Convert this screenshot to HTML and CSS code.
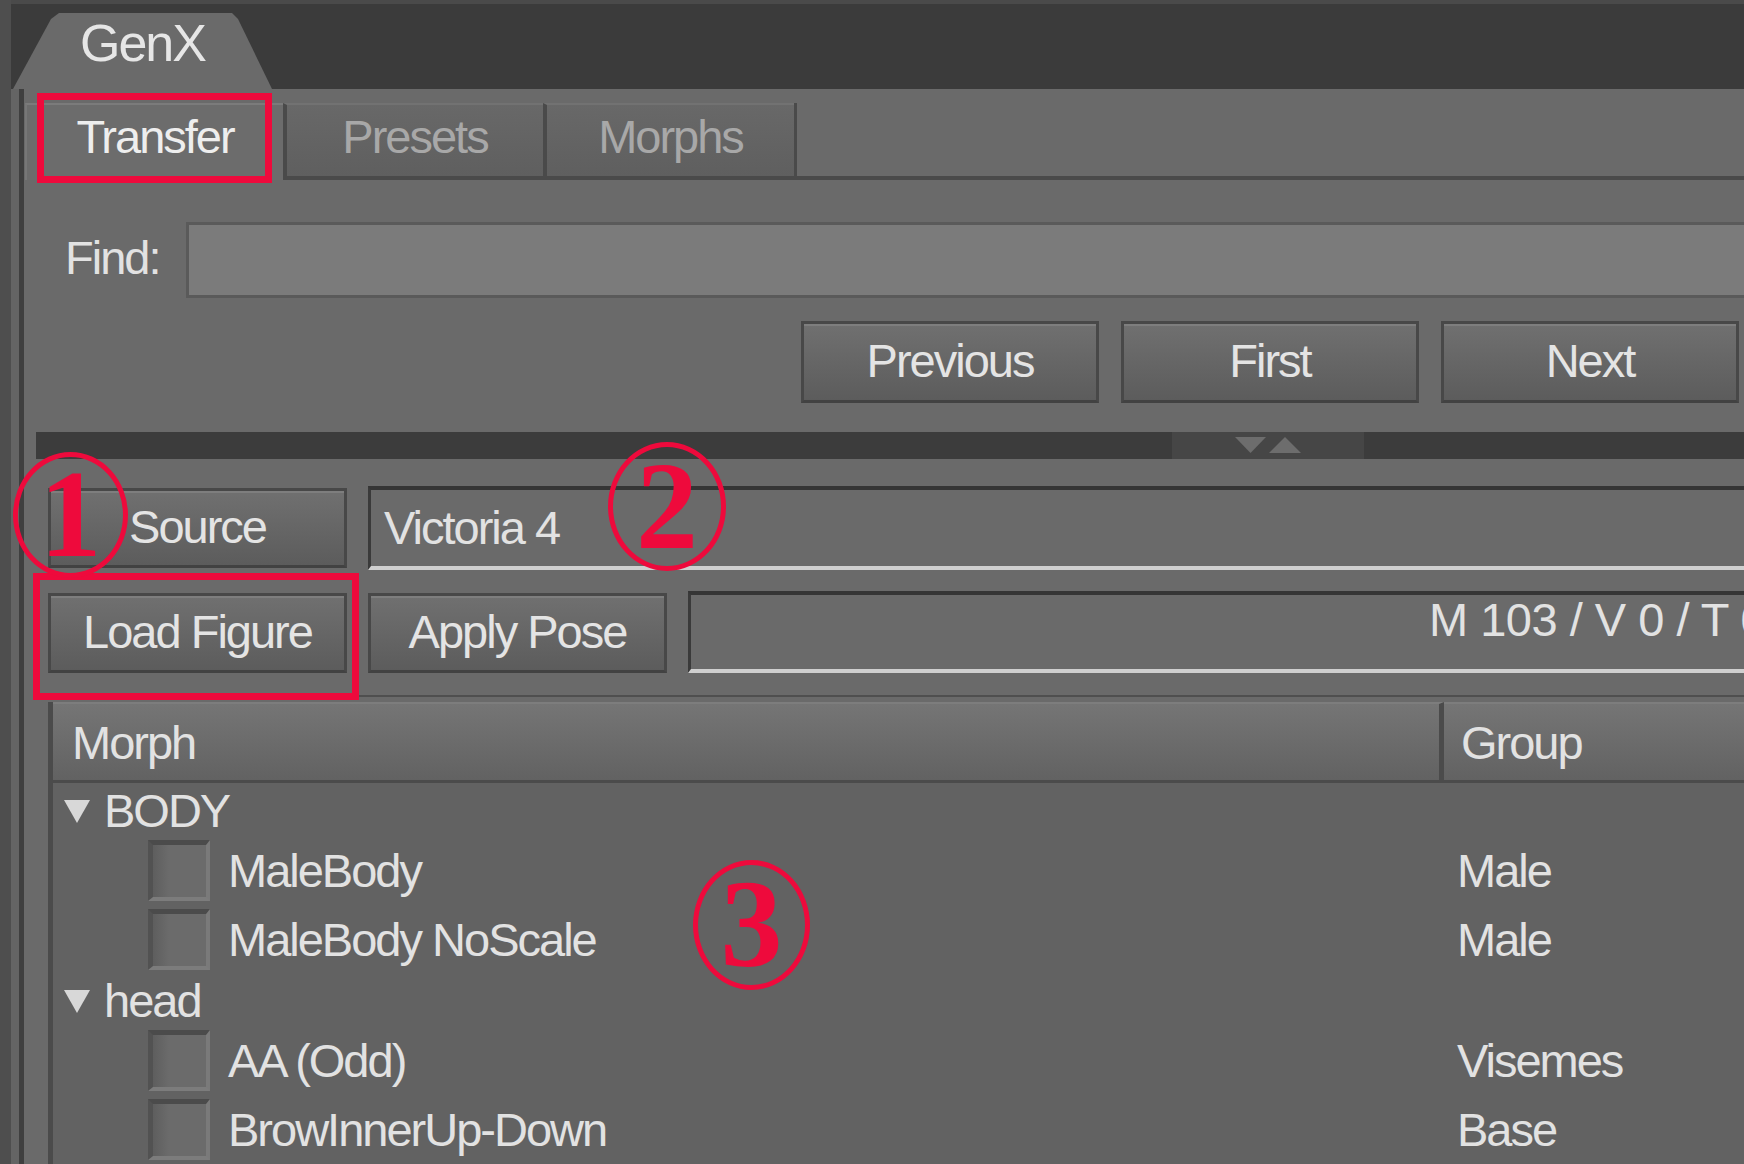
FILE: index.html
```html
<!DOCTYPE html>
<html>
<head>
<meta charset="utf-8">
<title>GenX</title>
<link rel="stylesheet" href="styles.css">
</head>
<body>
<div class="window">
  <div class="edge"></div>
  <div class="content">
    <div class="titlebar">
      <div class="doctab">GenX</div>
    </div>
    <div class="pane">
      <div class="pane-edge"></div>
      <div class="pane-line"></div>
      <div class="pane-body">
        <div class="tabs">
          <div class="tab active">Transfer</div>
          <div class="tab presets">Presets</div>
          <div class="tab morphs">Morphs</div>
          <div class="tab-fill"></div>
        </div>
        <div class="find-row">
          <div class="find-label">Find:</div>
          <div class="find-input"></div>
        </div>
        <div class="nav-row">
          <div class="btn">Previous</div>
          <div class="btn">First</div>
          <div class="btn">Next</div>
        </div>
        <div class="splitter">
          <div class="handle">
            <svg width="66" height="16" viewBox="0 0 66 16"><polygon points="0,0 31,0 15.5,16" fill="#6d6d6d"/><polygon points="34,16 66,16 50,0" fill="#6d6d6d"/></svg>
          </div>
        </div>
        <div class="source-row">
          <div class="btn wide">Source</div>
          <div class="field source-field">Victoria 4</div>
        </div>
        <div class="load-row">
          <div class="btn wide">Load Figure</div>
          <div class="btn wide">Apply Pose</div>
          <div class="field count-field">M 103 / V 0 / T 0</div>
        </div>
        <div class="sep"></div>
        <div class="table">
          <div class="thead">
            <div class="th morph">Morph</div>
            <div class="th group">Group</div>
          </div>
          <div class="tree">
            <div class="group-row"><svg class="tri" width="26" height="25" viewBox="0 0 26 25"><polygon points="0,2 26,2 13,25" fill="#d8d8d8"/></svg><span>BODY</span></div>
            <div class="item-row"><div class="check"></div><div class="name">MaleBody</div><div class="grp">Male</div></div>
            <div class="item-row"><div class="check"></div><div class="name">MaleBody NoScale</div><div class="grp">Male</div></div>
            <div class="group-row"><svg class="tri" width="26" height="25" viewBox="0 0 26 25"><polygon points="0,2 26,2 13,25" fill="#d8d8d8"/></svg><span>head</span></div>
            <div class="item-row"><div class="check"></div><div class="name">AA (Odd)</div><div class="grp">Visemes</div></div>
            <div class="item-row"><div class="check"></div><div class="name">BrowInnerUp-Down</div><div class="grp">Base</div></div>
          </div>
        </div>
      </div>
    </div>
  </div>

  <div class="mark box-transfer"></div>
  <div class="mark box-load"></div>
  <div class="num n1"><span>1</span></div>
  <div class="num n2"><span>2</span></div>
  <div class="num n3"><span>3</span></div>
</div>
</body>
</html>
```

FILE: styles.css
```css
html, body {
  margin: 0;
  padding: 0;
}
body {
  width: 1744px;
  height: 1164px;
  overflow: hidden;
  background: #4e4e4e;
  font-family: "Liberation Sans", Arial, sans-serif;
  font-size: 47px;
  letter-spacing: -2px;
  color: #e2e2e2;
}
.window {
  position: relative;
  display: flex;
  width: 1744px;
  height: 1164px;
  overflow: hidden;
}
.edge {
  flex: none;
  width: 11px;
  background: #4e4e4e;
}
.content {
  flex: 1;
  min-width: 0;
  display: flex;
  flex-direction: column;
  overflow: hidden;
}
.titlebar {
  flex: none;
  height: 85px;
  border-top: 4px solid #4a4a4a;
  background: #3b3b3b;
  display: flex;
  align-items: flex-end;
  padding-left: 2px;
}
.doctab {
  width: 259px;
  height: 76px;
  box-sizing: border-box;
  padding-top: 4px;
  background: #6a6a6a;
  clip-path: polygon(0 100%, 38px 6px, 46px 0, 219px 0, 225px 6px, 259px 100%);
  font-size: 52px;
  line-height: 52px;
  text-align: center;
  color: #e6e6e6;
}
.pane {
  flex: 1;
  display: flex;
  min-height: 0;
}
.pane-edge {
  flex: none;
  width: 8px;
  background: #646464;
}
.pane-line {
  flex: none;
  width: 5px;
  background: #3f3f3f;
}
.pane-body {
  flex: none;
  width: 1780px;
  background: #6a6a6a;
  display: flex;
  flex-direction: column;
}
.tabs {
  margin-top: 14px;
  height: 77px;
  display: flex;
  padding-left: 1px;
}
.tab {
  box-sizing: border-box;
  height: 77px;
  display: flex;
  align-items: center;
  justify-content: center;
}
.tab.active {
  width: 258px;
  background: #6c6c6c;
  border-top: 2px solid #7b7b7b;
  border-left: 2px solid #777777;
  color: #eeeeee;
  padding-bottom: 13px;
}
.tab.presets,
.tab.morphs {
  border-left: 4px solid #4a4a4a;
  border-bottom: 4px solid #4a4a4a;
  border-top: 2px solid #727272;
  background: linear-gradient(#686868, #5f5f5f);
  color: #a8a8a8;
  padding-bottom: 8px;
}
.tab.presets { width: 260px; }
.tab.morphs { width: 251px; }
.tab-fill {
  flex: 1;
  border-left: 3px solid #4a4a4a;
  border-bottom: 4px solid #4a4a4a;
}
.find-row {
  margin-top: 42px;
  display: flex;
  align-items: center;
  padding-left: 41px;
}
.find-label {
  width: 121px;
  flex: none;
  padding-bottom: 5px;
}
.find-input {
  flex: none;
  width: 1600px;
  height: 76px;
  box-sizing: border-box;
  border: 3px solid #5a5a5a;
  background: #7b7b7b;
}
.nav-row {
  margin-top: 23px;
  display: flex;
  gap: 22px;
  padding-left: 777px;
}
.btn {
  flex: none;
  width: 298px;
  height: 82px;
  box-sizing: border-box;
  border: 3px solid #484848;
  border-bottom-color: #424242;
  background: linear-gradient(#707070, #5c5c5c);
  box-shadow: inset 0 2px 0 #7e7e7e;
  display: flex;
  align-items: center;
  justify-content: center;
  padding-bottom: 3px;
  color: #e4e4e4;
  white-space: nowrap;
}
.btn.wide {
  width: 299px;
  height: 80px;
  margin-top: 2px;
}
.splitter {
  margin-top: 29px;
  margin-left: 12px;
  height: 32px;
  background: #3c3c3c;
  display: flex;
}
.handle {
  margin-left: 1136px;
  width: 192px;
  background: #464646;
  display: flex;
  justify-content: center;
  align-items: center;
}
.source-row {
  margin-top: 27px;
  display: flex;
  align-items: flex-start;
  padding-left: 24px;
}
.field {
  flex: none;
  box-sizing: border-box;
  border-top: 4px solid #353535;
  border-left: 3px solid #3a3a3a;
  border-bottom: 4px solid #cfcfcf;
  background: #6a6a6a;
  white-space: nowrap;
}
.source-field {
  margin-left: 21px;
  width: 1420px;
  height: 84px;
  display: flex;
  align-items: center;
  padding-left: 13px;
}
.load-row {
  margin-top: 21px;
  display: flex;
  align-items: flex-start;
  padding-left: 24px;
  gap: 21px;
}
.count-field {
  width: 1100px;
  height: 82px;
  padding-left: 738px;
  padding-top: 1px;
  line-height: 47px;
  letter-spacing: -0.5px;
}
.sep {
  margin-top: 22px;
  margin-left: 12px;
  height: 3px;
  background: #4f4f4f;
}
.table {
  margin-top: 5px;
  margin-left: 24px;
  border-left: 5px solid #4b4b4b;
  background: #626262;
  flex: 1;
  display: flex;
  flex-direction: column;
}
.thead {
  display: flex;
  height: 81px;
  box-sizing: border-box;
  border-bottom: 3px solid #4b4b4b;
}
.th {
  box-sizing: border-box;
  background: linear-gradient(#757575, #626262);
  border-top: 2px solid #7d7d7d;
  display: flex;
  align-items: center;
}
.th.morph {
  width: 1391px;
  border-right: 5px solid #4b4b4b;
  padding-left: 19px;
}
.th.group {
  flex: 1;
  padding-left: 17px;
}
.tree {
  padding-top: 1px;
  display: flex;
  flex-direction: column;
}
.group-row {
  height: 52px;
  display: flex;
  align-items: center;
  padding-left: 11px;
}
.tri {
  flex: none;
  margin-right: 14px;
}
.item-row {
  height: 69px;
  display: flex;
  align-items: center;
  padding-left: 95px;
}
.check {
  flex: none;
  width: 62px;
  height: 61px;
  box-sizing: border-box;
  border-top: 5px solid #4b4b4b;
  border-left: 5px solid #525252;
  border-right: 4px solid #7a7a7a;
  border-bottom: 4px solid #7c7c7c;
  background: linear-gradient(90deg, #5e5e5e, #6b6b6b 30%, #6b6b6b);
  margin-right: 18px;
}
.name {
  flex: none;
  width: 1229px;
  white-space: nowrap;
}
.grp {
  white-space: nowrap;
}
.mark {
  position: absolute;
  box-sizing: border-box;
  border: 7px solid #ee0a3c;
}
.box-transfer {
  left: 37px;
  top: 93px;
  width: 235px;
  height: 90px;
}
.box-load {
  left: 33px;
  top: 573px;
  width: 326px;
  height: 127px;
}
.num {
  position: absolute;
  box-sizing: border-box;
  border: 5px solid #ee0a3c;
  border-radius: 50%;
  display: flex;
  align-items: center;
  justify-content: center;
  font-family: "Liberation Serif", "Times New Roman", serif;
  font-weight: bold;
  font-size: 124px;
  line-height: 1;
  letter-spacing: 0;
  color: #ee0a3c;
}
.num span {
  display: block;
  line-height: 1;
}
.n1 {
  left: 13px;
  top: 452px;
  width: 115px;
  height: 126px;
}
.n2 {
  left: 608px;
  top: 442px;
  width: 118px;
  height: 129px;
}
.n3 {
  left: 693px;
  top: 860px;
  width: 117px;
  height: 130px;
}
```
